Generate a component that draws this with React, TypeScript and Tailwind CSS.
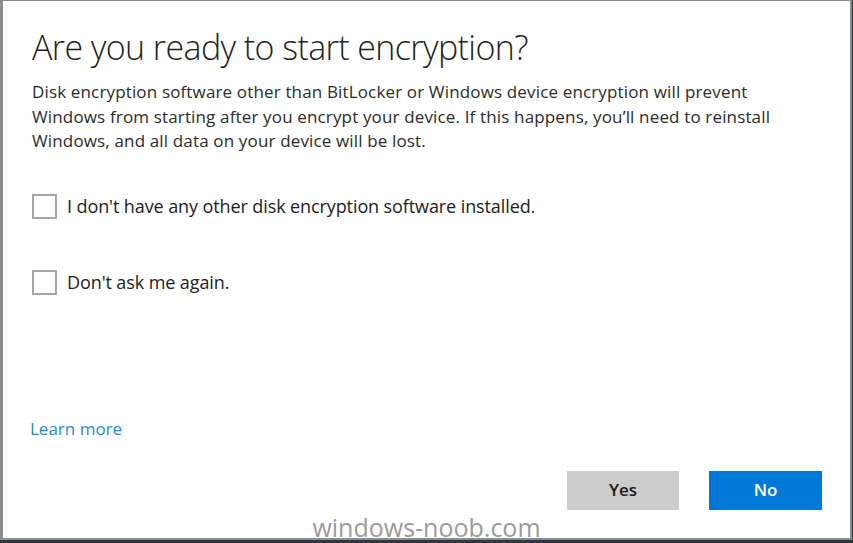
import { useState } from "react";

function Check({ label }: { label: string }) {
  const [on, setOn] = useState(false);
  return (
    <label className="flex items-center gap-[10px] h-[25px] cursor-pointer select-none">
      <span
        onClick={() => setOn(!on)}
        className="w-[25px] h-[25px] shrink-0 border-2 border-[#a6a6a6] bg-white flex items-center justify-center text-[#333] text-sm"
      >
        {on ? "✓" : ""}
      </span>
      <span className="text-[18px] leading-[25px] text-[#222] tracking-[-0.1px]">{label}</span>
    </label>
  );
}

export default function App() {
  return (
    <div className="w-[853px] h-[543px] bg-[#2e3640] flex flex-col overflow-hidden font-['Open_Sans','Noto_Sans',sans-serif]">
      <div className="relative w-[852px] h-[540px] bg-white border-l-[3px] border-t border-r-2 border-b-2 border-[#8c8c8c] flex flex-col pl-[29px] pr-[28px]">
        <h1 className="mt-[26px] text-[34px] font-light leading-[40px] text-[#1f1f1f] tracking-[-0.6px] whitespace-nowrap">
          Are you ready to start encryption?
        </h1>
        <p className="mt-[13px] text-[17px] leading-[24.5px] text-[#2b2b2b] whitespace-nowrap tracking-[0.15px]">
          Disk encryption software other than BitLocker or Windows device encryption will prevent
          <br />
          Windows from starting after you encrypt your device. If this happens, you’ll need to reinstall
          <br />
          Windows, and all data on your device will be lost.
        </p>
        <div className="mt-[40px] flex flex-col gap-[51px]">
          <Check label="I don't have any other disk encryption software installed." />
          <Check label="Don't ask me again." />
        </div>
        <a href="#" className="mt-[122px] -ml-[2px] text-[17px] leading-[24px] text-[#1f8be0] w-fit">
          Learn more
        </a>
        <div className="mt-[30px] flex justify-end gap-[30px]">
          <button className="w-[112px] h-[39px] bg-[#cccccc] text-[17px] font-semibold text-[#1a1a1a]">
            Yes
          </button>
          <button className="w-[113px] h-[39px] bg-[#0078d7] text-[17px] font-semibold text-white">
            No
          </button>
        </div>
        <div className="absolute bottom-[-2px] left-0 right-0 flex justify-center">
          <span className="text-[25px] leading-[26px] text-[#9a9a9a] font-normal">windows-noob.com</span>
        </div>
      </div>
    </div>
  );
}
